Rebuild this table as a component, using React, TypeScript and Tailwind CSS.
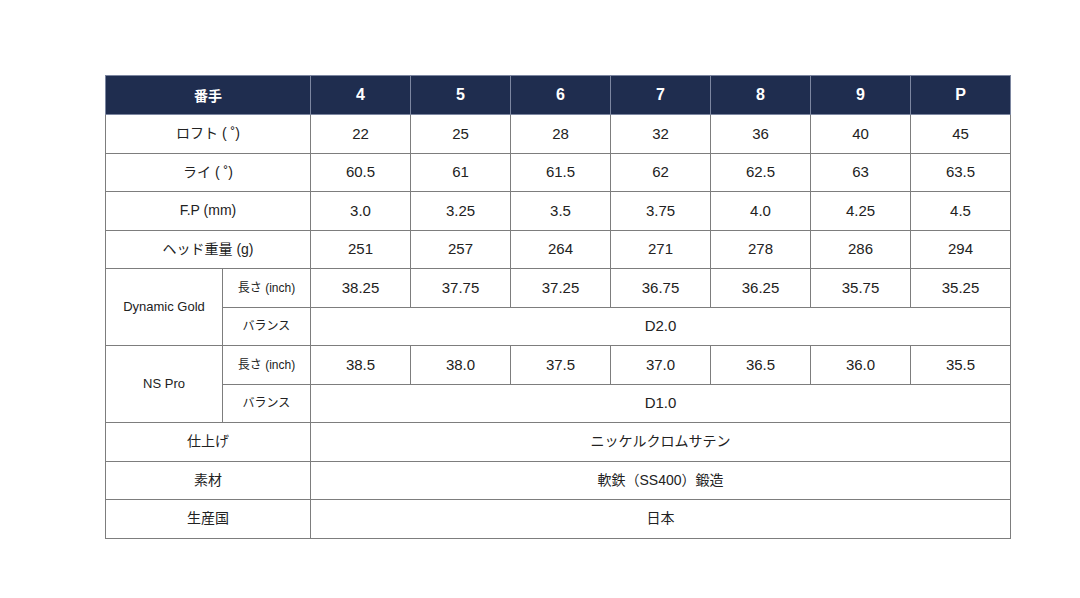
const clubs = ["4", "5", "6", "7", "8", "9", "P"];

const topRows = [
  { label: "ロフト ( ˚)", values: ["22", "25", "28", "32", "36", "40", "45"] },
  { label: "ライ ( ˚)", values: ["60.5", "61", "61.5", "62", "62.5", "63", "63.5"] },
  { label: "F.P (mm)", values: ["3.0", "3.25", "3.5", "3.75", "4.0", "4.25", "4.5"] },
  { label: "ヘッド重量 (g)", values: ["251", "257", "264", "271", "278", "286", "294"] },
];

const shafts = [
  { name: "Dynamic Gold", lengths: ["38.25", "37.75", "37.25", "36.75", "36.25", "35.75", "35.25"], balance: "D2.0" },
  { name: "NS Pro", lengths: ["38.5", "38.0", "37.5", "37.0", "36.5", "36.0", "35.5"], balance: "D1.0" },
];

const bottomRows = [
  { label: "仕上げ", value: "ニッケルクロムサテン" },
  { label: "素材", value: "軟鉄（SS400）鍛造" },
  { label: "生産国", value: "日本" },
];

const cell = "border border-[#7d7d7d] text-center align-middle p-0";

export default function App() {
  return (
    <div
      className="w-[1080px] h-[598px] bg-white pt-[75px] pl-[105px]"
      style={{ fontFamily: '"Liberation Sans", "Noto Sans CJK JP", sans-serif' }}
    >
      <table className="w-[906px] border-collapse table-fixed text-[15px] text-[#222]">
        <colgroup>
          <col className="w-[117px]" />
          <col className="w-[88px]" />
          {clubs.map((c) => (
            <col key={c} className="w-[100px]" />
          ))}
        </colgroup>
        <tbody>
          <tr className="h-[39px] bg-[#1f2d4f] text-white">
            <td colSpan={2} className="border border-[#7c86a0] text-center text-[14px] font-bold" style={{ fontFamily: '"Noto Sans CJK JP", sans-serif' }}>
              番手
            </td>
            {clubs.map((c) => (
              <td key={c} className="border border-[#7c86a0] text-center text-[16px] font-bold">
                {c}
              </td>
            ))}
          </tr>
          {topRows.map((r) => (
            <tr key={r.label} className="h-[38.5px]">
              <td colSpan={2} className={`${cell} text-[14px]`}>
                {r.label}
              </td>
              {r.values.map((v, i) => (
                <td key={i} className={cell}>
                  {v}
                </td>
              ))}
            </tr>
          ))}
          {shafts.map((s) => (
            <>
              <tr key={s.name + "-len"} className="h-[38.5px]">
                <td rowSpan={2} className={`${cell} text-[13px]`}>
                  {s.name}
                </td>
                <td className={`${cell} text-[12px]`}>長さ (inch)</td>
                {s.lengths.map((v, i) => (
                  <td key={i} className={cell}>
                    {v}
                  </td>
                ))}
              </tr>
              <tr key={s.name + "-bal"} className="h-[38.5px]">
                <td className={`${cell} text-[12px]`}>バランス</td>
                <td colSpan={7} className={cell}>
                  {s.balance}
                </td>
              </tr>
            </>
          ))}
          {bottomRows.map((r) => (
            <tr key={r.label} className="h-[38.5px]">
              <td colSpan={2} className={`${cell} text-[14px]`}>
                {r.label}
              </td>
              <td colSpan={7} className={`${cell} text-[14px]`}>
                {r.value}
              </td>
            </tr>
          ))}
        </tbody>
      </table>
    </div>
  );
}
